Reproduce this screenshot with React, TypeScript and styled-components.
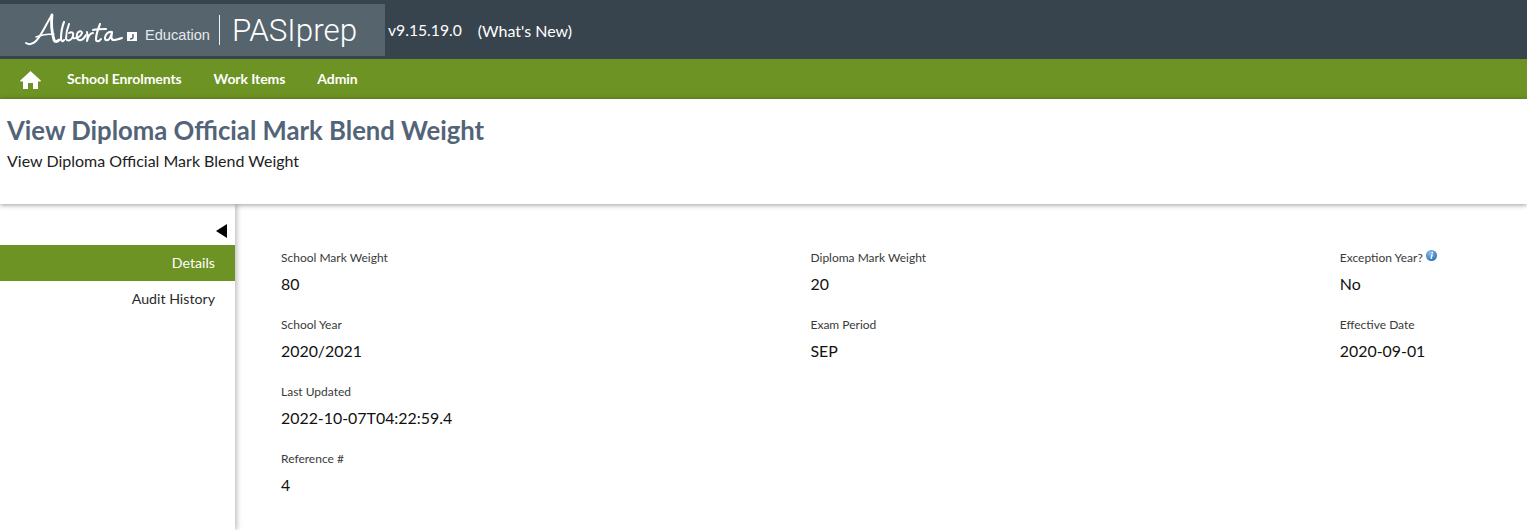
import React from "react";
import styled, { createGlobalStyle } from "styled-components";

const GlobalStyle = createGlobalStyle`
  html, body {
    margin: 0;
    padding: 0;
    background: #fff;
    font-family: Lato, "Open Sans", sans-serif;
    color: #1c1c1c;
    overflow: hidden;
  }
  * { box-sizing: border-box; }
`;

const Page = styled.div`
  display: flex;
  flex-flow: column;
  height: 530px;
`;
const TopBar = styled.header`
  align-items: center;
  background: #37444e;
  display: flex;
  flex: 0 0 59px;
  padding-top: 1px;
`;
const LogoBox = styled.div`
  align-items: center;
  background: #56646d;
  display: flex;
  height: 52px;
  width: 385px;
`;
const LogoMark = styled.svg`
  display: block;
  margin-left: 24px;
  flex: none;
`;
const Ministry = styled.span`
  color: #e4e8ea;
  font-family: "Liberation Sans", Arial, sans-serif;
  font-size: 14.6px;
  margin: 9px 0 0 7px;
`;
const LogoDivider = styled.span`
  background: #f1f3f4;
  height: 30px;
  margin-left: 9px;
  width: 1px;
`;
const Product = styled.span`
  color: #fff;
  font-family: Roboto, "Liberation Sans", sans-serif;
  font-size: 31.4px;
  font-weight: 300;
  margin-left: 12px;
`;
const Version = styled.span`
  color: #fff;
  font-size: 15.7px;
  margin-left: 3px;
`;
const WhatsNew = styled.a`
  color: #fff;
  font-size: 16px;
  margin-left: 16px;
`;
const GlobalNavigation = styled.nav`
  align-items: center;
  background: #6c9323;
  display: flex;
  flex: 0 0 40px;
  padding: 0 0 1px 20px;
`;
const HomeIcon = styled.svg`
  display: block;
  margin: 2px 26px 0 0;
`;
const NavItem = styled.a`
  color: #fff;
  font-size: 14px;
  font-weight: 700;
  letter-spacing: -0.08px;
  margin-right: 32px;
`;
const PageHeading = styled.section`
  background: #fff;
  box-shadow: 0 1px 5px rgba(0, 0, 0, 0.4);
  flex: 0 0 105px;
  padding: 14px 7px 0;
  position: relative;
  z-index: 2;
`;
const Title = styled.h1`
  color: #536478;
  font-size: 25.7px;
  font-weight: 700;
  line-height: 34px;
  margin: 0;
`;
const Subtitle = styled.p`
  color: #222;
  font-size: 16px;
  line-height: 20px;
  margin: 4px 0 0;
`;
const Body = styled.div`
  display: flex;
  flex: 1;
  min-height: 0;
`;
const Sidebar = styled.aside`
  background: #fff;
  box-shadow: 2px 0 5px rgba(0, 0, 0, 0.25);
  flex: 0 0 235px;
  position: relative;
  z-index: 1;
`;
const Collapse = styled.div`
  align-items: center;
  display: flex;
  height: 41px;
  justify-content: flex-end;
  padding: 13px 8px 0 0;
`;
const Arrow = styled.span`
  border-bottom: 7px solid transparent;
  border-right: 11px solid #000;
  border-top: 7px solid transparent;
  display: block;
  height: 0;
  width: 0;
`;
const SideItem = styled.a<{ $active?: boolean }>`
  align-items: center;
  background: ${({ $active }) => ($active ? "#6c9323" : "transparent")};
  color: ${({ $active }) => ($active ? "#fff" : "#2a2a2a")};
  display: flex;
  font-size: 14.2px;
  height: 36px;
  justify-content: flex-end;
  padding: 0 20px 2px 0;
`;
const Content = styled.main`
  flex: 1;
  padding: 45px 0 0 46px;
`;
const FieldGrid = styled.div`
  display: grid;
  grid-auto-rows: 67px;
  grid-template-columns: 529.5px 529.3px 1fr;
`;
const Field = styled.div<{ $newRow?: boolean }>`
  display: flex;
  flex-flow: column;
  grid-column: ${({ $newRow }) => ($newRow ? "1" : "auto")};
`;
const Label = styled.label`
  align-items: flex-start;
  color: #3a3a3a;
  display: flex;
  font-size: 12px;
  gap: 3px;
  height: 17px;
  line-height: 17px;
`;
const Value = styled.span`
  color: #111;
  font-size: 15.9px;
  line-height: 20px;
  margin-top: 8px;
`;
const InfoIcon = styled.svg`
  display: block;
  margin-top: 1px;
`;

const AlbertaLogo = () => (
  <LogoMark width="114" height="36" viewBox="0 0 114 36" role="img" aria-label="Alberta">
    <g fill="none" stroke="#fff" strokeLinecap="round" strokeLinejoin="round">
      {/* big A: swoosh up, heavy downstroke, crossbar */}
      <path d="M2 31c3 2 7 1 10-2C18 23 23 10 28 3" strokeWidth="2" />
      <path d="M28 3c-1 8 0 18 2 25 1 2 3 2 5 0" strokeWidth="2.8" />
      <path d="M12 25c5-2 11-3 18-3" strokeWidth="1.4" />
      {/* l and b */}
      <path d="M40 10c-2 5-3 12-3 17 0 2 2 3 3 1" strokeWidth="2.1" />
      <path d="M45 12c-2 5-3 10-3 15 2 3 6 1 7-3 1-3-1-5-4-3" strokeWidth="2" />
      {/* e */}
      <path d="M49 26c4 1 8-2 9-5 0-3-4-2-5 1-1 4 1 7 4 6 2 0 3-2 5-5" strokeWidth="2" />
      {/* r */}
      <path d="M63 20c1 3 1 6 0 9 1-4 3-8 6-8" strokeWidth="2" />
      {/* t */}
      <path d="M76 12c-2 5-4 11-4 15 0 3 3 3 5 0M69 18c4-1 8-1 13-1" strokeWidth="2.1" />
      {/* a */}
      <path d="M88 20c-4-1-7 3-7 6 0 3 3 3 5 0l2-5c-1 4-1 7 2 7 2 0 5-1 8-2" strokeWidth="2.1" />
    </g>
    <rect x="103" y="20" width="10" height="9" fill="#fff" />
    <path d="M109 22v3c0 1-1 2-3 2" fill="none" stroke="#56646d" strokeWidth="1.5" />
  </LogoMark>
);

const fields = [
  { label: "School Mark Weight", value: "80" },
  { label: "Diploma Mark Weight", value: "20" },
  { label: "Exception Year?", value: "No", info: true },
  { label: "School Year", value: "2020/2021" },
  { label: "Exam Period", value: "SEP" },
  { label: "Effective Date", value: "2020-09-01" },
  { label: "Last Updated", value: "2022-10-07T04:22:59.4" },
  { label: "Reference #", value: "4", newRow: true },
];

const App: React.FC = () => {
  return (
    <Page>
      <GlobalStyle />
      <TopBar>
        <LogoBox>
          <AlbertaLogo />
          <Ministry>Education</Ministry>
          <LogoDivider />
          <Product>PASIprep</Product>
        </LogoBox>
        <Version>v9.15.19.0</Version>
        <WhatsNew>(What's New)</WhatsNew>
      </TopBar>
      <GlobalNavigation>
        <HomeIcon width="21" height="18" viewBox="0 0 21 18" aria-label="Home">
          <path d="M10.5 0 21 9.8l-.6.7H18V18h-5v-6H8v6H3v-7.5H.6L0 9.8z" fill="#fff" />
        </HomeIcon>
        <NavItem>School Enrolments</NavItem>
        <NavItem>Work Items</NavItem>
        <NavItem>Admin</NavItem>
      </GlobalNavigation>
      <PageHeading>
        <Title>View Diploma Official Mark Blend Weight</Title>
        <Subtitle>View Diploma Official Mark Blend Weight</Subtitle>
      </PageHeading>
      <Body>
        <Sidebar>
          <Collapse>
            <Arrow />
          </Collapse>
          <SideItem $active>Details</SideItem>
          <SideItem>Audit History</SideItem>
        </Sidebar>
        <Content>
          <FieldGrid>
            {fields.map((field) => (
              <Field key={field.label} $newRow={field.newRow}>
                <Label>
                  {field.label}
                  {field.info && (
                    <InfoIcon width="11" height="11" viewBox="0 0 11 11" aria-label="Info">
                      <defs>
                        <radialGradient id="infoFill" cx="0.4" cy="0.3" r="0.8">
                          <stop offset="0" stopColor="#8fc0e8" />
                          <stop offset="1" stopColor="#1f68b0" />
                        </radialGradient>
                      </defs>
                      <circle cx="5.5" cy="5.5" r="5.5" fill="url(#infoFill)" />
                      <circle cx="6.3" cy="2.6" r="0.9" fill="#fff" />
                      <path d="M6.2 4.4 5 8.8" stroke="#fff" strokeWidth="1.4" />
                    </InfoIcon>
                  )}
                </Label>
                <Value>{field.value}</Value>
              </Field>
            ))}
          </FieldGrid>
        </Content>
      </Body>
    </Page>
  );
};

export default App;
